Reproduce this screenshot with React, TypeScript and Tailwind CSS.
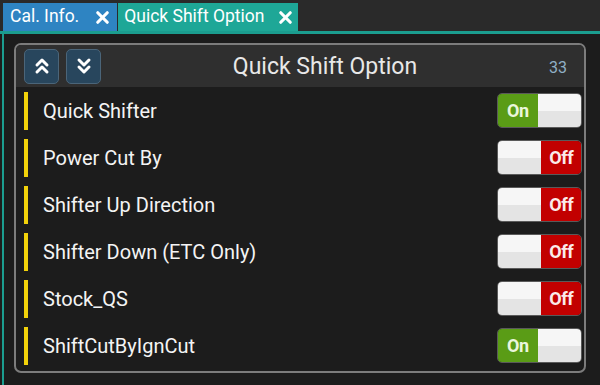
import React from 'react';
import { ChevronsUp, ChevronsDown, X } from 'lucide-react';

type Option = { label: string; on: boolean };

const options: Option[] = [
  { label: 'Quick Shifter', on: true },
  { label: 'Power Cut By', on: false },
  { label: 'Shifter Up Direction', on: false },
  { label: 'Shifter Down (ETC Only)', on: false },
  { label: 'Stock_QS', on: false },
  { label: 'ShiftCutByIgnCut', on: true },
];

const Knob = () => (
  <div className="w-[44px] h-full flex flex-col">
    <div className="flex-1 bg-[#f6f6f6]" />
    <div className="flex-1 bg-[#e4e4e4]" />
  </div>
);

const Toggle: React.FC<{ on: boolean }> = ({ on }) => (
  <div className="w-[85px] h-[35px] rounded-[5px] border border-[#5a5a5a] overflow-hidden flex">
    {on ? (
      <>
        <div className="w-[40px] h-full bg-[#5a9c16] flex items-center justify-center text-[18px] font-bold tracking-[-0.5px] text-[#eaf6dc]">
          On
        </div>
        <Knob />
      </>
    ) : (
      <>
        <Knob />
        <div className="w-[40px] h-full bg-[#c20000] flex items-center justify-center text-[18px] font-bold tracking-[-0.5px] text-[#fbeaea]">
          Off
        </div>
      </>
    )}
  </div>
);

const Tab: React.FC<{ label: string; active?: boolean }> = ({ label, active }) => (
  <div
    className={
      active
        ? 'h-[28px] flex items-center pl-[6px] pr-[3px] gap-[12px] bg-[#1ea797] text-white'
        : 'h-[28px] flex items-center pl-[7px] pr-[5px] gap-[14px] bg-[#2e84c2] text-white'
    }
  >
    <span className="text-[17.5px] leading-none">{label}</span>
    <X size={19} strokeWidth={4} />
  </div>
);

export default function App() {
  return (
    <div
      className="w-[600px] h-[385px] bg-[#1c1c1c] overflow-hidden flex flex-col"
      style={{ fontFamily: 'Roboto, "Liberation Sans", sans-serif' }}
    >
      {/* tab strip */}
      <div className="h-[31px] bg-[#2a2a2a] flex items-end pl-[3px] gap-[1px]">
        <Tab label="Cal. Info." />
        <Tab label="Quick Shift Option" active />
      </div>
      <div className="h-[3px] bg-[#1b9d8f]" />

      <div className="flex-1 ml-[2px] border-l-[2px] border-[#1b9d8f] pl-[10px] pt-[9px]">
        <div className="w-[572px] h-[330px] rounded-[7px] border-2 border-[#7c7c7c] overflow-hidden flex flex-col">
          {/* header */}
          <div className="h-[42px] bg-[#2f2f2f] flex items-center pl-[8px] pr-[17px]">
            <div className="flex gap-[7px]">
              <button className="w-[35px] h-[35px] rounded-[5px] bg-[#28465d] border border-[#4b6579] flex items-center justify-center text-white">
                <ChevronsUp size={24} strokeWidth={3} />
              </button>
              <button className="w-[35px] h-[35px] rounded-[5px] bg-[#28465d] border border-[#4b6579] flex items-center justify-center text-white">
                <ChevronsDown size={24} strokeWidth={3} />
              </button>
            </div>
            <div className="flex-1 pt-[3px] text-center text-[23px] text-[#e8e8e8]">Quick Shift Option</div>
            <div className="pt-[3px] text-[16px] text-[#8fb0c6]">33</div>
          </div>

          {/* rows */}
          <div className="flex-1 flex flex-col">
            {options.map(opt => (
              <div key={opt.label} className="h-[47px] flex items-center pl-[8px] pr-[2px]">
                <div className="w-[4px] h-[38px] bg-[#f2d20a]" />
                <div className="flex-1 pl-[15px] text-[20px] text-[#f4f4f4]">{opt.label}</div>
                <Toggle on={opt.on} />
              </div>
            ))}
          </div>
        </div>
      </div>
    </div>
  );
}
